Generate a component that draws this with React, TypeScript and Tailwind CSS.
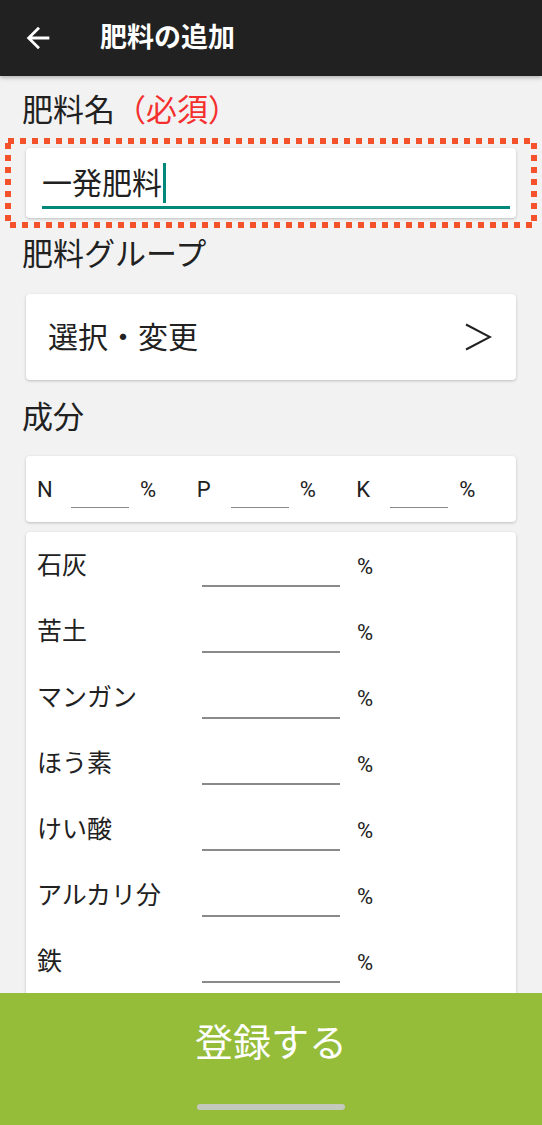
import { useState } from "react";

const COMPONENTS = ["石灰", "苦土", "マンガン", "ほう素", "けい酸", "アルカリ分", "鉄"];

function SectionLabel({ children }: { children: React.ReactNode }) {
  return (
    <div className="h-[44px] pl-[22px] text-[31px] leading-[44px] text-[#212121]">
      {children}
    </div>
  );
}

function NpkField({ label }: { label: string }) {
  return (
    <div className="flex w-[160px] items-center">
      <span className="w-[34px] text-[22px]">{label}</span>
      <span className="mt-[36px] h-[1px] w-[58px] bg-[#8a8a8a]" />
      <span className="ml-[11px] text-[22px]">%</span>
    </div>
  );
}

export default function App() {
  const [name] = useState("一発肥料");

  return (
    <div className="flex h-[1125px] w-[542px] flex-col overflow-hidden bg-[#f2f2f2] font-['Roboto','Noto_Sans_CJK_JP',sans-serif] text-[#212121]">
      <header className="relative z-10 flex h-[76px] shrink-0 items-center bg-[#212121] shadow-[0_2px_4px_rgba(0,0,0,0.25)]">
        <button className="ml-[21px] flex h-[34px] w-[34px] items-center justify-center text-white">
          <svg viewBox="0 0 24 24" className="h-[34px] w-[34px]" fill="currentColor">
            <path d="M20 11H7.83l5.59-5.59L12 4l-8 8 8 8 1.41-1.41L7.83 13H20v-2z" />
          </svg>
        </button>
        <h1 className="ml-[45px] text-[27px] font-bold text-white">肥料の追加</h1>
      </header>

      <main className="flex-1 overflow-hidden pt-[13px]">
        <SectionLabel>
          肥料名<span className="text-[#f4302e]">（必須）</span>
        </SectionLabel>

        {/* required field, outlined with a dotted frame */}
        <div className="relative mx-[5px] mt-[5px] px-[21px] py-[10px]">
          <svg className="pointer-events-none absolute inset-0 h-full w-full" preserveAspectRatio="none">
            <rect
              x="3"
              y="3"
              width="526"
              height="84"
              fill="none"
              stroke="#f4522b"
              strokeWidth="6"
              strokeDasharray="6 6"
            />
          </svg>
          <div className="h-[70px] rounded-[4px] bg-white pl-[16px] pr-[6px] pt-[15px] shadow-[0_1px_3px_rgba(0,0,0,0.22)]">
            <div className="flex h-[40px] items-center text-[30px]">
              {name}
              <span className="ml-[1px] inline-block h-[40px] w-[3px] bg-[#00897b]" />
            </div>
            <div className="mt-[3px] h-[3px] bg-[#00897b]" />
          </div>
        </div>

        <div className="mt-[5px]">
          <SectionLabel>肥料グループ</SectionLabel>
        </div>

        <button className="mx-[26px] mt-[17px] flex h-[86px] w-[490px] items-center justify-between rounded-[4px] bg-white pl-[22px] pr-[24px] shadow-[0_1px_3px_rgba(0,0,0,0.22)]">
          <span className="text-[30px]">選択・変更</span>
          <svg viewBox="0 0 28 28" className="h-[28px] w-[28px]" fill="none" stroke="#212121" strokeWidth="2">
            <path d="M2 1.5 L26 14 L2 26.5" />
          </svg>
        </button>

        <div className="mt-[16px]">
          <SectionLabel>成分</SectionLabel>
        </div>

        <div className="mx-[26px] mt-[16px] flex h-[66px] items-center rounded-[4px] bg-white pl-[11px] shadow-[0_1px_3px_rgba(0,0,0,0.22)]">
          <NpkField label="N" />
          <NpkField label="P" />
          <NpkField label="K" />
        </div>

        <div className="mx-[26px] mt-[10px] rounded-[4px] bg-white pb-[40px] pl-[11px] pt-[1px] shadow-[0_1px_3px_rgba(0,0,0,0.22)]">
          {COMPONENTS.map((item) => (
            <div key={item} className="flex h-[66px] items-center">
              <span className="w-[165px] text-[25px]">{item}</span>
              <span className="mt-[40px] h-[1.5px] w-[138px] bg-[#8a8a8a]" />
              <span className="ml-[17px] text-[22px]">%</span>
            </div>
          ))}
        </div>
      </main>

      <footer className="flex h-[132px] shrink-0 flex-col items-center bg-[#95bd3a]">
        <button className="h-[100px] text-[38px] leading-[100px] text-white">登録する</button>
        <div className="mt-[11px] h-[6px] w-[148px] rounded-full bg-[#c4c9bd]" />
      </footer>
    </div>
  );
}
